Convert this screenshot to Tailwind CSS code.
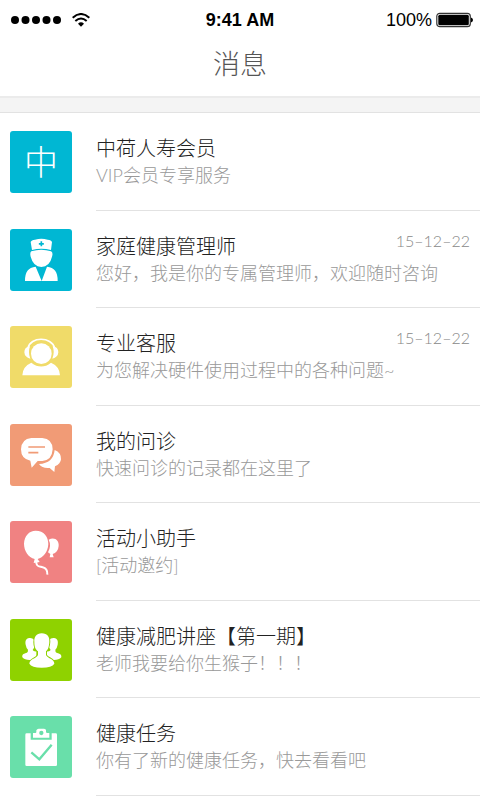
<!DOCTYPE html>
<html lang="zh-CN">
<head>
<meta charset="utf-8">
<meta name="viewport" content="width=device-width, initial-scale=1">
<title>消息</title>
<script src="https://cdn.jsdelivr.net/npm/@tailwindcss/browser@4"></script>
</head>
<body class="flex min-h-screen flex-col bg-white font-[Lato,'Noto_Sans_CJK_SC',sans-serif] font-light">
<header class="border-b-2 border-[#ebebeb]">
  <div class="grid h-10 grid-cols-3 items-center px-[7px] font-['Liberation_Sans',sans-serif] text-lg font-normal text-black">
    <div class="flex items-center gap-[10px] pl-1">
      <svg class="h-2 w-[51px]" viewBox="0 0 51 8" aria-hidden="true"><circle cx="4" cy="4" r="4"/><circle cx="14.500" cy="4" r="4"/><circle cx="25" cy="4" r="4"/><circle cx="35.500" cy="4" r="4"/><circle cx="46" cy="4" r="4"/></svg>
      <svg class="h-[14px] w-[18px]" viewBox="0 0 54 42" fill="none" stroke="#000" stroke-width="6" aria-hidden="true"><path d="M2 14Q27-8 52 14M10 24Q27 9 44 24"/><path d="M18 32Q27 24 36 32L27 41Z" fill="#000" stroke="none"/></svg>
    </div>
    <time class="text-center font-bold">9:41 AM</time>
    <div class="flex items-center justify-end gap-1">
      <span>100%</span>
      <svg class="h-4 w-[37px]" viewBox="0 0 37 16" aria-hidden="true"><rect x=".8" y="1.300" width="33.500" height="13.400" rx="3" fill="#fff" stroke="#333" stroke-width="1.200"/><rect x="2.300" y="2.800" width="30.500" height="10.400" rx="1.500"/><path d="M35 5.500q2 .8 2 2.500t-2 2.500z"/></svg>
    </div>
  </div>
  <h1 class="flex h-14 items-start justify-center pt-1 text-[27px] leading-10 font-light text-[#555]">消息</h1>
</header>
<div class="h-[14px] bg-[#f4f4f4]"></div>
<main class="flex flex-1 flex-col border-t border-[#e2e2e2] pb-1">
  <ul class="grid flex-1 auto-rows-fr">
    <li><a href="#member" class="flex h-full pl-[10px]">
      <span class="mt-[18px] mr-6 flex size-[62px] shrink-0 items-center justify-center rounded-[3px] bg-[#00b7d3] text-[34px] leading-none font-light text-white">中</span>
      <span class="flex min-w-0 flex-1 flex-col border-b border-[#e2e2e2] pt-[22px] pr-[10px]">
        <span class="text-xl leading-[26px] text-[#222]">中荷人寿会员</span>
        <span class="text-lg leading-7 text-[#999]">VIP会员专享服务</span>
      </span></a></li>
    <li><a href="#doctor" class="flex h-full pl-[10px]">
      <svg class="mt-[18px] mr-6 size-[62px] shrink-0 rounded-[3px] bg-[#00b7d3]" viewBox="30 27 186 186" fill="#fff" aria-hidden="true"><path d="M92 66Q94 60 105 59Q124 54 143 59Q154 60 156 66L153 90Q124 82 96 90Z"/><path d="M94 94Q124 84 153 94Q160 98 156 110Q149 140 124 141Q100 140 92 110Q89 98 94 94Z"/><path d="M75 183Q74 143 107 140L125 183ZM125 183L141 140Q174 143 173 183Z"/><path d="M124 64v15M116.500 71.500h15" stroke="#00b7d3" stroke-width="5"/></svg>
      <span class="flex min-w-0 flex-1 flex-col border-b border-[#e2e2e2] pt-[22px] pr-[10px]">
        <span class="flex justify-between"><span class="text-xl leading-[26px] text-[#222]">家庭健康管理师</span><time class="text-base leading-4 text-[#888]">15–12–22</time></span>
        <span class="text-lg leading-7 text-[#999]">您好，我是你的专属管理师，欢迎随时咨询</span>
      </span></a></li>
    <li><a href="#service" class="flex h-full pl-[10px]">
      <svg class="mt-[18px] mr-6 size-[62px] shrink-0 rounded-[3px] bg-[#f0db69]" viewBox="30 25 186 186" fill="#fff" aria-hidden="true"><circle cx="124" cy="108" r="31"/><path d="M67 173Q68 146 94 135Q124 158 153 135Q179 146 180 173Z"/><path d="M84 91C91 56 155 56 164 91" fill="none" stroke="#fff" stroke-width="5"/><path d="M90 86Q73 88 73 104Q74 119 91 123Q83 104 90 86ZM158 86Q175 88 175 104Q174 119 157 123Q165 104 158 86Z"/></svg>
      <span class="flex min-w-0 flex-1 flex-col border-b border-[#e2e2e2] pt-[22px] pr-[10px]">
        <span class="flex justify-between"><span class="text-xl leading-[26px] text-[#222]">专业客服</span><time class="text-base leading-4 text-[#888]">15–12–22</time></span>
        <span class="text-lg leading-7 text-[#999]">为您解决硬件使用过程中的各种问题~</span>
      </span></a></li>
    <li><a href="#consult" class="flex h-full pl-[10px]">
      <svg class="mt-[18px] mr-6 size-[62px] shrink-0 rounded-[3px] bg-[#f19b76]" viewBox="30 27 186 186" fill="#fff" aria-hidden="true"><path d="M164 105Q184 113 183 133Q182 147 165 154L163 171L149 159Q126 161 117 147Q160 145 164 105Z"/><path d="M94 69H127Q157 71 158 103Q156 136 127 138H113L95 158L91 137Q63 132 63 103Q64 72 94 69Z"/><path d="M85 96H135M85 113H115" stroke="#f19b76" stroke-width="5"/></svg>
      <span class="flex min-w-0 flex-1 flex-col border-b border-[#e2e2e2] pt-[22px] pr-[10px]">
        <span class="text-xl leading-[26px] text-[#222]">我的问诊</span>
        <span class="text-lg leading-7 text-[#999]">快速问诊的记录都在这里了</span>
      </span></a></li>
    <li><a href="#events" class="flex h-full pl-[10px]">
      <svg class="mt-[18px] mr-6 size-[62px] shrink-0 rounded-[3px] bg-[#f08282]" viewBox="30 28 186 186" fill="#fff" aria-hidden="true"><path d="M146 84C164 74 178 87 176 103C175 116 168 124 158 127L161 137H149L151 127L144 122Q155 101 146 84Z"/><path d="M107 57C132 57 145 76 145 97C144 121 129 138 113 142L119 151L101 154L104 142C85 138 72 117 72 96C73 73 87 57 107 57Z"/><path d="M109 151C108 166 120 164 128 167Q143 170 142 189" fill="none" stroke="#fff" stroke-width="6"/></svg>
      <span class="flex min-w-0 flex-1 flex-col border-b border-[#e2e2e2] pt-[22px] pr-[10px]">
        <span class="text-xl leading-[26px] text-[#222]">活动小助手</span>
        <span class="text-lg leading-7 text-[#999]">[活动邀约]</span>
      </span></a></li>
    <li><a href="#lecture" class="flex h-full pl-[10px]">
      <svg class="mt-[18px] mr-6 size-[62px] shrink-0 rounded-[3px] bg-[#8fd200]" viewBox="30 27 186 186" fill="#fff" aria-hidden="true"><path d="M103 90Q97 83 88 84C77 85 75 94 77 104Q79 115 84 119Q85 127 79 129C69 132 66 134 67 142Q75 151 92 150L109 140V124Q101 125 98 120L105 109Z"/><path d="M147 90Q153 83 162 84C173 85 175 94 173 104Q171 115 166 119Q165 127 171 129C181 132 185 134 184 142Q176 151 159 150L141 140V124Q149 125 152 120L145 109Z"/><path d="M125 70C143 70 149 81 148 95C147 113 143 119 138 124V135C141 145 163 146 163 161Q156 173 125 173Q95 173 88 161C89 146 111 145 114 135V124C107 119 103 111 103 96C102 81 109 70 125 70Z" stroke="#8fd200" stroke-width="6" paint-order="stroke"/></svg>
      <span class="flex min-w-0 flex-1 flex-col border-b border-[#e2e2e2] pt-[22px] pr-[10px]">
        <span class="text-xl leading-[26px] text-[#222]">健康减肥讲座【第一期】</span>
        <span class="text-lg leading-7 text-[#999]">老师我要给你生猴子！！！</span>
      </span></a></li>
    <li><a href="#tasks" class="flex h-full pl-[10px]">
      <svg class="mt-[18px] mr-6 size-[62px] shrink-0 rounded-[3px] bg-[#69dfaa]" viewBox="30 25 186 186" fill="#fff" aria-hidden="true"><path d="M80 77H92V96H155V77H167Q171 77 171 81V171Q171 175 167 175H80Q76 175 76 171V81Q76 77 80 77Z"/><path d="M99 90V76H106Q109 76 109 73V68Q111 63 116 63H132Q138 63 138 68V73Q138 76 142 76H148V90Z"/><circle cx="124" cy="76" r="6.500" fill="#69dfaa"/><path d="M94 134L118 155L155 111" fill="none" stroke="#69dfaa" stroke-width="7"/></svg>
      <span class="flex min-w-0 flex-1 flex-col border-b border-[#e2e2e2] pt-[22px] pr-[10px]">
        <span class="text-xl leading-[26px] text-[#222]">健康任务</span>
        <span class="text-lg leading-7 text-[#999]">你有了新的健康任务，快去看看吧</span>
      </span></a></li>
  </ul>
</main>
</body>
</html>
